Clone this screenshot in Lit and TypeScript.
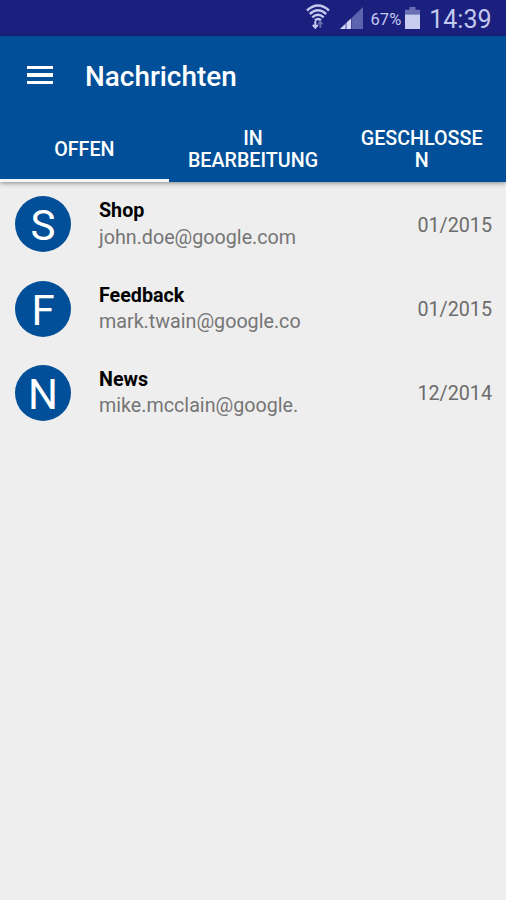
import { LitElement, html, css } from "lit";
import { customElement, property, state } from "lit/decorators.js";
import { classMap } from "lit/directives/class-map.js";

@customElement("status-bar")
class StatusBar extends LitElement {
  static styles = css`
    :host { display: flex; height: 35.5px; flex: none; background: #1b207f; color: #c3c8ee; align-items: center; justify-content: flex-end; box-sizing: border-box; padding-right: 14.500px; }
    svg { display: block; flex: none; }
    .wifi { margin-right: 10px; }
    .signal { margin-right: 8px; margin-top: 1px; }
    .pct { font-size: 16.500px; line-height: 36px; margin-right: 4px; padding-top: 4px; }
    .battery { margin-right: 9px; }
    .time { font-size: 25px; line-height: 36px; padding-top: 4px; }
  `;
  render() {
    return html`
      <svg class="wifi" width="24" height="27" viewBox="0 0 24 27" fill="none" stroke="currentColor" stroke-width="2.4">
        <path d="M1 6.500Q12-3.500 23 6.500M3.800 10Q12 2.500 20.200 10M6.300 13.300Q12 8 17.700 13.300M9 16.300Q12 13.700 15 16.300"/>
        <path d="M9.300 17v6.500M6.800 20.800l2.500 3 2.500-3" stroke-width="2"/>
        <path d="M14.300 24v-6.500M12.200 20.300l2.100-2.600 2.100 2.600" stroke="#686cae" stroke-width="1.700"/>
      </svg>
      <svg class="signal" width="23" height="22" viewBox="0 0 23 23" preserveAspectRatio="none">
        <path d="M0 23L23 0V23z" fill="#5e63ad"/>
        <path d="M0 23L11 12V23z" fill="#d5d9f5"/>
        <path d="M6 16.500V23M11.500 11V23" stroke="#3f4498" stroke-width="1"/>
      </svg>
      <span class="pct">67%</span>
      <svg class="battery" width="15" height="22" viewBox="0 0 15 23" preserveAspectRatio="none">
        <path d="M4.500 0h6v3H15v6H0V3h4.500z" fill="#6a6fb4"/>
        <path d="M0 8h15v15H0z" fill="#c8cdf0"/>
      </svg>
      <span class="time">14:39</span>`;
  }
}

@customElement("message-row")
class MessageRow extends LitElement {
  @property() subject = "";
  @property() sender = "";
  @property() date = "";
  static styles = css`
    :host { display: flex; height: 84.400px; align-items: center; box-sizing: border-box; padding: 0 14px 0 15px; }
    .avatar { width: 56px; height: 56px; border-radius: 50%; background: #004f98; color: #fff; font-size: 42px; line-height: 60px; text-align: center; flex: none; margin-right: 28px; }
    .text { flex: 1; min-width: 0; line-height: 26.500px; padding-top: 1px; font-size: 19.700px; white-space: nowrap; }
    .subject { color: #000; font-weight: 700; }
    .sender { color: #757575; }
    .date { color: #6c6c6c; font-size: 19.700px; padding-top: 2px; }
  `;
  render() {
    return html`
      <div class="avatar">${this.subject.charAt(0)}</div>
      <div class="text">
        <div class="subject">${this.subject}</div>
        <div class="sender">${this.sender}</div>
      </div>
      <div class="date">${this.date}</div>`;
  }
}

@customElement("app-root")
class AppRoot extends LitElement {
  @state() private active = 0;
  private tabs = ["OFFEN", "IN BEARBEITUNG", "GESCHLOSSEN"];
  private messages = [
    { subject: "Shop", sender: "john.doe@google.com", date: "01/2015" },
    { subject: "Feedback", sender: "mark.twain@google.co", date: "01/2015" },
    { subject: "News", sender: "mike.mcclain@google.", date: "12/2014" },
  ];
  static styles = css`
    :host { display: flex; flex-direction: column; height: 100vh; background: #eee; font-family: Roboto, "Noto Sans", sans-serif; overflow: hidden; }
    header { flex: none; background: #004f98; color: #fff; box-shadow: 0 1px 5px rgba(0, 0, 0, 0.45); }
    .bar { display: flex; align-items: center; height: 79px; padding-left: 27px; }
    .menu { width: 26px; height: 19px; display: flex; flex-direction: column; justify-content: space-between; margin-right: 32px; }
    .menu i { height: 3.300px; background: #fff; }
    h1 { margin: 0; font-size: 27.900px; font-weight: 500; line-height: 36px; padding-top: 3px; }
    .tabs { display: grid; grid-template-columns: repeat(3, 1fr); height: 67.500px; }
    .tab { display: flex; align-items: center; justify-content: center; text-align: center; box-sizing: border-box; height: 67.500px; padding: 0 18px; font-size: 19.700px; font-weight: 500; line-height: 22px; border-bottom: 3px solid transparent; }
    .tab span { min-width: 0; max-width: 100%; overflow-wrap: anywhere; padding-top: 7px; }
    .active { border-color: #f4f5f7; }
  `;
  render() {
    return html`
      <status-bar></status-bar>
      <header>
        <div class="bar">
          <div class="menu"><i></i><i></i><i></i></div>
          <h1>Nachrichten</h1>
        </div>
        <div class="tabs">
          ${this.tabs.map((t, i) => html`<div class=${classMap({ tab: true, active: i === this.active })} @click=${() => (this.active = i)}><span>${t}</span></div>`)}
        </div>
      </header>
      <main>
        ${this.messages.map((m) => html`<message-row .subject=${m.subject} .sender=${m.sender} .date=${m.date}></message-row>`)}
      </main>`;
  }
}
